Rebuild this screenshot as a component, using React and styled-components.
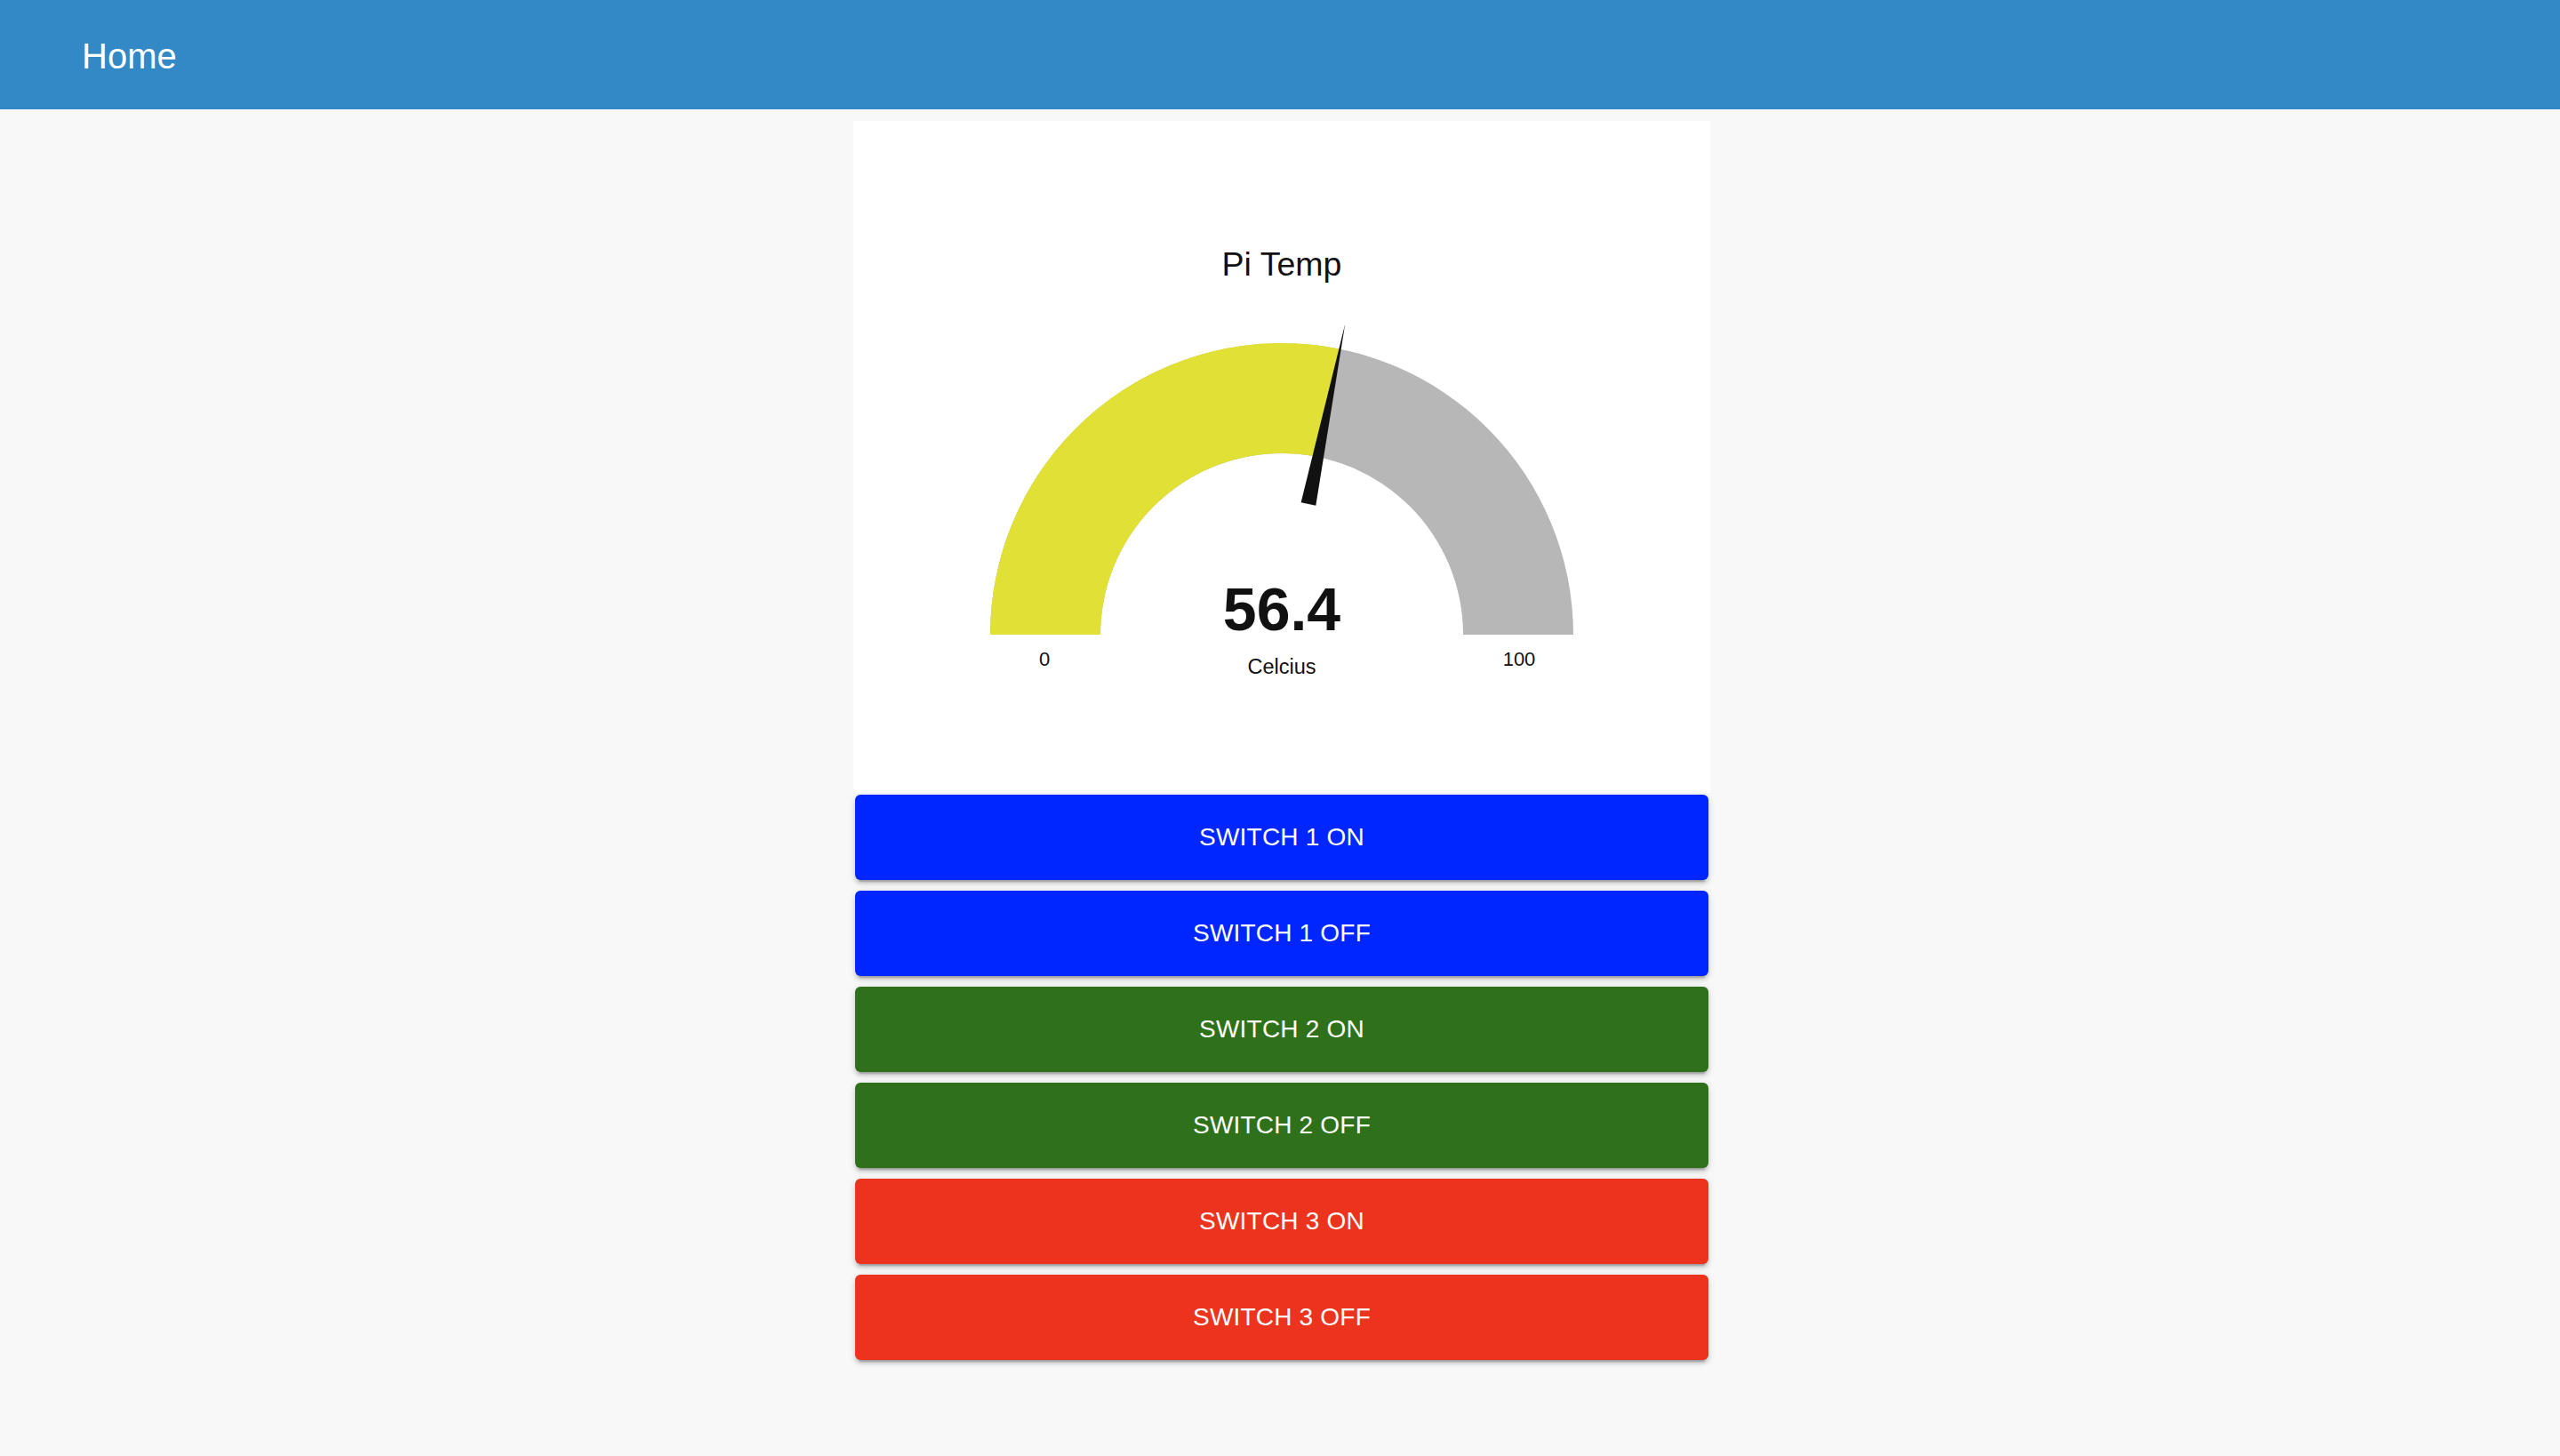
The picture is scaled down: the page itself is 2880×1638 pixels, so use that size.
import React from "react";
import styled, { createGlobalStyle } from "styled-components";

const GlobalStyle = createGlobalStyle`
  html, body {
    margin: 0;
    padding: 0;
    background: #f8f8f8;
    font-family: "Liberation Sans", Arial, Helvetica, sans-serif;
  }
`;

const Page = styled.div`
  min-height: 1638px;
  background: #f8f8f8;
`;

const Header = styled.header`
  height: 123px;
  background: #3388c6;
  display: flex;
  align-items: center;
  padding: 4px 0 0 92px;
  box-sizing: border-box;
`;

const HeaderTitle = styled.h1`
  margin: 0;
  font-size: 40px;
  font-weight: 400;
  color: #ffffff;
`;

const Content = styled.div`
  padding-left: 4px;
`;

const Main = styled.main`
  width: 964px;
  margin: 13px auto 0;
  display: flex;
  flex-direction: column;
`;

const Card = styled.section`
  background: #ffffff;
  height: 756px;
  margin-bottom: 2px;
`;

const GaugeSvg = styled.svg`
  display: block;
  width: 964px;
  height: 756px;
`;

const ButtonList = styled.div`
  display: flex;
  flex-direction: column;
  gap: 12px;
  padding: 0 2px;
`;

const SwitchButton = styled.button`
  height: 96px;
  border: none;
  border-radius: 6px;
  background: ${(p) => p.$bg};
  color: #ffffff;
  font-family: "Liberation Sans", Arial, Helvetica, sans-serif;
  font-size: 28px;
  letter-spacing: 0.2px;
  text-transform: uppercase;
  cursor: pointer;
  box-shadow: 0 6px 2px -4px rgba(0, 0, 0, 0.2), 0 4px 4px 0 rgba(0, 0, 0, 0.14),
    0 2px 10px 0 rgba(0, 0, 0, 0.12);
`;

const COLORS = {
  blue: "#0026ff",
  green: "#2f711a",
  red: "#eb331e",
};

const buttons = [
  { label: "Switch 1 On", color: COLORS.blue },
  { label: "Switch 1 Off", color: COLORS.blue },
  { label: "Switch 2 On", color: COLORS.green },
  { label: "Switch 2 Off", color: COLORS.green },
  { label: "Switch 3 On", color: COLORS.red },
  { label: "Switch 3 Off", color: COLORS.red },
];

const FONT = "Liberation Sans, Arial, sans-serif";

function Gauge({ title, value, min, max, label }) {
  const cx = 482;
  const cy = 578;
  const R = 328;
  const r = 204;
  const frac = (value - min) / (max - min);
  const a = Math.PI - frac * Math.PI;
  const pt = (rad, ang) => [cx + rad * Math.cos(ang), cy - rad * Math.sin(ang)];
  const [ox, oy] = pt(R, a);
  const [ix, iy] = pt(r, a);
  const bg = `M${cx - R} ${cy} A${R} ${R} 0 0 1 ${cx + R} ${cy} L${cx + r} ${cy} A${r} ${r} 0 0 0 ${cx - r} ${cy} Z`;
  const fg = `M${cx - R} ${cy} A${R} ${R} 0 0 1 ${ox} ${oy} L${ix} ${iy} A${r} ${r} 0 0 0 ${cx - r} ${cy} Z`;
  const dx = Math.cos(a);
  const dy = -Math.sin(a);
  const px = -dy;
  const py = dx;
  const baseR = 150;
  const tipR = 357;
  const hw = 8.5;
  const bx = cx + dx * baseR;
  const by = cy + dy * baseR;
  const tx = cx + dx * tipR;
  const ty = cy + dy * tipR;
  const needle = `${bx + px * hw},${by + py * hw} ${tx},${ty} ${bx - px * hw},${by - py * hw}`;
  return (
    <GaugeSvg viewBox="0 0 964 756">
      <text x="482" y="174" textAnchor="middle" fontSize="37.5" fill="#111" fontFamily={FONT}>
        {title}
      </text>
      <path d={bg} fill="#b7b7b7" />
      <path d={fg} fill="#e1e034" />
      <polygon points={needle} fill="#111111" />
      <text x="482" y="573" textAnchor="middle" fontSize="68" fontWeight="700" fill="#111" fontFamily={FONT}>
        {value}
      </text>
      <text x="482" y="622" textAnchor="middle" fontSize="23.5" fill="#111" fontFamily={FONT}>
        {label}
      </text>
      <text x="215" y="613" textAnchor="middle" fontSize="22" fill="#111" fontFamily={FONT}>
        {min}
      </text>
      <text x="749" y="613" textAnchor="middle" fontSize="22" fill="#111" fontFamily={FONT}>
        {max}
      </text>
    </GaugeSvg>
  );
}

export default function App() {
  return (
    <Page>
      <GlobalStyle />
      <Header>
        <HeaderTitle>Home</HeaderTitle>
      </Header>
      <Content>
        <Main>
          <Card>
            <Gauge title="Pi Temp" value={56.4} min={0} max={100} label="Celcius" />
          </Card>
          <ButtonList>
            {buttons.map((b) => (
              <SwitchButton key={b.label} $bg={b.color}>
                {b.label}
              </SwitchButton>
            ))}
          </ButtonList>
        </Main>
      </Content>
    </Page>
  );
}
